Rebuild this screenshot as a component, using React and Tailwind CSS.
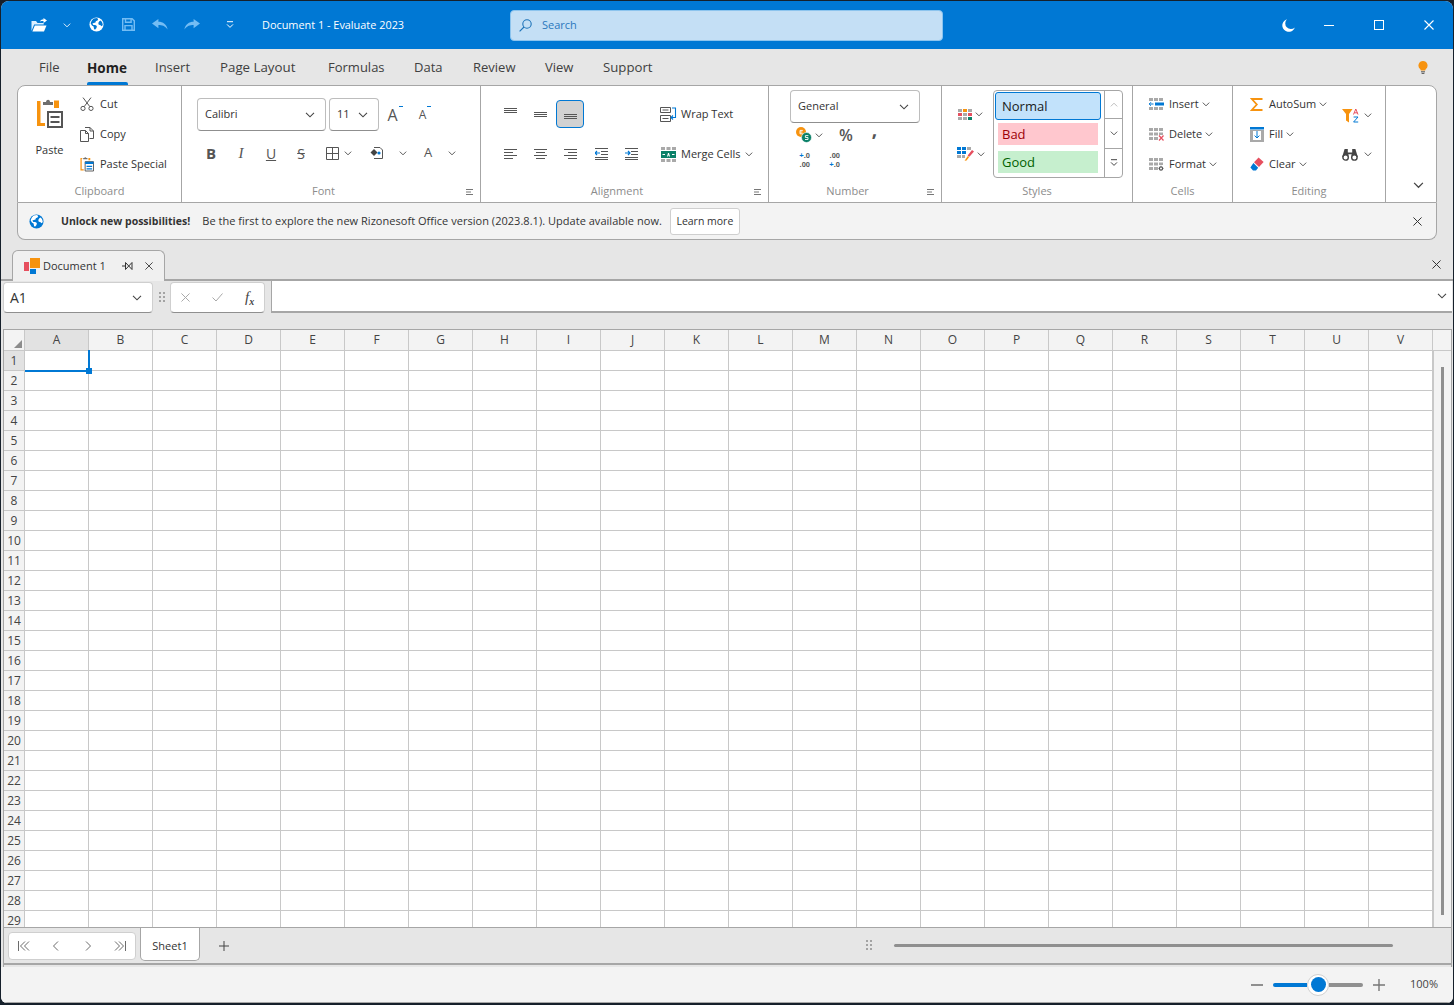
import React from "react";

const COLS = "ABCDEFGHIJKLMNOPQRSTUV".split("");
const ROWS = Array.from({ length: 29 }, (_, i) => i + 1);

// ---------- small drawings ----------
const Chevron = ({ w = 9, c = "#444", up = false }) => (
  <svg width={w} height={w * 0.6} viewBox="0 0 10 6" fill="none" stroke={c} strokeWidth="1.1" className="shrink-0">
    <path d={up ? "M1 5.5 5 1.5l4 4" : "M1 .8l4 4 4-4"} />
  </svg>
);

const X = ({ s = 10, c = "#333", sw = 1.1 }) => (
  <svg width={s} height={s} viewBox="0 0 10 10" stroke={c} strokeWidth={sw} className="shrink-0">
    <path d="M.5.5l9 9M9.5.5l-9 9" />
  </svg>
);

const Globe = ({ s = 16, bg = "#fff", fg = "#0078d4" }) => (
  <svg width={s} height={s} viewBox="0 0 16 16" className="shrink-0">
    <circle cx="8" cy="8" r="7.5" fill={bg} />
    <path fill={fg} d="M5 1.6 8.6 1l1.2 1.4-1 1.6-1.4.2-.5 1.6-1.8.6L3.6 7l1 1.4 2 .2 1.8 1-.4 2-1.6 1.9-1-.7-.5-2.6-1.8-1.2-1.4-2.4L3 3.6zM11 4.4l1.6-.6 1.6 2.2.5 2.4-1.2 1.4-1.6-1.3-1.5-.2-.5-1.9z" />
  </svg>
);

const TitleIcons = {
  Folder: () => (
    <svg width="16" height="14" viewBox="0 0 16 14" fill="#dcefff">
      <path d="M.5 3V13l2.6-6.6h9.6V5H6.5L5 3z" />
      <path d="M3.8 7.4h11.7L13 13.4H1.4z" fill="#fff" />
      <path d="M9 3.4c.6-1.4 2-2 3.5-1.8V0L16 2.6l-3.5 2.4V3c-1.4 0-2.6 0-3.5.4z" fill="#fff" />
    </svg>
  ),
  Save: () => (
    <svg width="13" height="13" viewBox="0 0 13 13" fill="none" stroke="#74bdf4" strokeWidth="1.4">
      <path d="M.7.7h9.4l2.2 2.2v9.4H.7z" />
      <path d="M3.5.7v3.6h5.6V.7M3 12.3V7.6h7v4.7" />
    </svg>
  ),
  Undo: ({ flip }) => (
    <svg width="16" height="11" viewBox="0 0 16 11" fill="#74bdf4" className={flip ? "-scale-x-100" : ""}>
      <path d="M6.4 0 0 4.6l6.4 4.6V6c3.6 0 6.6.8 9.2 4.4C14.6 5.4 11 2.8 6.4 2.8z" />
    </svg>
  ),
  Customize: () => (
    <svg width="8" height="8" viewBox="0 0 8 8" fill="none" stroke="#fff" strokeWidth="1">
      <path d="M1 .7h6M1 3.4l3 3 3-3" />
    </svg>
  ),
  Moon: () => (
    <svg width="13" height="13" viewBox="0 0 13 13" fill="#fff">
      <path d="M5 .3a6.4 6.4 0 1 0 7.8 8.2A5.6 5.6 0 0 1 5 .3z" />
    </svg>
  ),
};

const Paste = () => (
  <svg width="28" height="30" viewBox="0 0 28 30">
    <path fill="#f7930f" d="M1 2h3.5v22H9v3H1zM18 1.5h5V9h-5z" />
    <path fill="#6e6e6e" d="M7 3h3c.3-3 4-3 4 0h3v3H7z" />
    <path fill="#555" fillRule="evenodd" d="M11 12h16v17H11zm2 2v13h12V14z" />
    <path fill="#555" d="M14.5 17h9v2h-9zM14.5 22h9v2h-9z" />
  </svg>
);

const Scissors = () => (
  <svg width="14" height="14" viewBox="0 0 14 14" fill="none" stroke="#555" strokeWidth="1">
    <circle cx="3" cy="11.4" r="2.1" /><circle cx="11" cy="11.4" r="2.1" />
    <path d="M4.2 9.6 11 .6M9.8 9.6 3 .6" />
  </svg>
);

const Copy = () => (
  <svg width="14" height="15" viewBox="0 0 14 15" fill="none" stroke="#555" strokeWidth="1">
    <path d="M5 .5h5l3.5 3.5v7.5H9.5M10 .5v3.5h3.5" />
    <path d="M.5 3.5h5l3 3v8h-8zM5.5 3.5v3h3" fill="#fff" />
  </svg>
);

const PasteSpecial = () => (
  <svg width="15" height="16" viewBox="0 0 15 16">
    <path fill="#f7930f" d="M.5 1.5h2v1H1.8v11H4v1.400H.5zM9 1.500h2V4H9z" />
    <path fill="#6e6e6e" d="M3.4 1.6h1.2c.2-1.2 2-1.2 2.2 0H8V3H3.4z" />
    <path fill="#fff" stroke="#555" d="M5.5 5.5h9v10h-9z" />
    <path fill="#0078d4" d="M5.5 5.5h9V8h-9zM7 10h6v1.3H7zM7 12.5h6v1.3H7z" />
  </svg>
);

const Lines = ({ rows, c = "#555" }) => (
  // one svg for all the alignment glyphs, rows = [[x1,x2,y],...]
  <svg width="13" height="13" viewBox="0 0 13 13" stroke={c} strokeWidth="1" className="shrink-0">
    {rows.map((r, i) => <path key={i} d={`M${r[0]} ${r[2] + 0.5}H${r[1]}`} />)}
  </svg>
);

const Indent = ({ flip }) => (
  <svg width="13" height="12" viewBox="0 0 13 12" fill="none" className="shrink-0">
    <path stroke="#555" d="M0 .5h13M6 3.5h7M6 6.5h7M0 11.5h13M0 9.5h13" />
    <path stroke="#0078d4" strokeWidth="1.2" d={flip ? "M5 5H0M2 3 0 5l2 2" : "M0 5h5M3 3l2 2-2 2"} />
  </svg>
);

const WrapText = () => (
  <svg width="17" height="15" viewBox="0 0 17 15" fill="none">
    <path stroke="#555" d="M.5.5h10v5H.5zM.5 8.500h10v6H.5zM2.500 3h6M2.500 11.500h6" />
    <path stroke="#0078d4" strokeWidth="1.1" d="M12 1h3.500v9.500H11M13 8.500l-2 2 2 2" />
  </svg>
);

const MergeCells = () => (
  <svg width="15" height="15" viewBox="0 0 15 15">
    <path fill="#a9a9a9" d="M0 0h4v3H0zM5.500 0h4v3h-4zM11 0h4v3h-4zM0 12h4v3H0zM5.500 12h4v3h-4zM11 12h4v3h-4z" />
    <path fill="#0a8068" d="M0 4h15v7H0z" />
    <path fill="#fff" d="M1.500 7h2.500v1H1.500zM11 7h2.500v1H11zM6 9.500 7 6h1l1 3.500H8L7.500 8 7 9.500z" />
  </svg>
);

const Launcher = () => (
  <svg width="7" height="6" viewBox="0 0 7 6" stroke="#777" strokeWidth="1" className="shrink-0">
    <path d="M0 .5h7M0 3h5M0 5.500h7" />
  </svg>
);

const Currency = () => (
  <svg width="16" height="16" viewBox="0 0 16 16" className="shrink-0">
    <circle cx="5" cy="5" r="5" fill="#f7930f" />
    <circle cx="10.500" cy="10.500" r="5" fill="#0a8068" stroke="#fff" strokeWidth=".6" />
    <path d="M6.800 3.400H4v3.400h2.800M4 5h2.400" stroke="#fff" fill="none" strokeWidth=".9" />
    <path d="M12.400 8.600H9.400v1.900h2.600v2H9" stroke="#fff" fill="none" strokeWidth=".9" />
  </svg>
);

const StyleGrid = () => (
  <svg width="14" height="11" viewBox="0 0 14 11" className="shrink-0">
    <path fill="#a9a9a9" d="M0 0h4v3H0zM10 0h4v3h-4zM5 4h4v3H5zM0 8h4v3H0zM5 8h4v3H5z" />
    <path fill="#f7930f" d="M5 0h4v3H5z" />
    <path fill="#e64f5f" d="M0 4h4v3H0z" />
    <path fill="#e64f5f" d="M10 4h4v3h-4z" />
    <path fill="#0a8068" d="M10 8h4v3h-4z" />
  </svg>
);

const TableBrush = () => (
  <svg width="17" height="14" viewBox="0 0 17 14" className="shrink-0">
    <path fill="#0078d4" d="M0 0h4v3H0zM5 0h4v3H5zM0 4h4v3H0zM5 4h4v3H5z" />
    <path fill="#a9a9a9" d="M10 0h4v3h-4zM0 8h4v3H0zM5 8h3v3H5z" />
    <path fill="#e64f5f" d="M15 3l2 1.400-4.600 5.400-1.800-1.400z" />
    <path fill="#f7930f" d="M10.800 9l1.400 1.100L9.600 13.600 7.600 13.800z" />
  </svg>
);

const GrayCells = ({ children, w = 15, h = 13 }) => (
  <svg width={w} height={h} viewBox="0 0 15 13" className="shrink-0">
    <path fill="#a9a9a9" d="M0 0h4v3H0zM5 0h4v3H5zM10 0h4v3h-4zM0 4.500h4v3H0zM5 4.500h4v3H5zM10 4.500h4v3h-4zM0 9h4v3H0zM5 9h4v3H5zM10 9h4v3h-4z" />
    {children}
  </svg>
);

const InsertIcon = () => (
  <GrayCells>
    <path fill="#fff" d="M0 4h15v4H0z" />
    <path fill="#0078d4" d="M6 4.500h9v3H6z" />
    <path stroke="#0078d4" fill="none" d="M4.500 6H0M2 4.200 .2 6 2 7.800" />
  </GrayCells>
);
const DeleteIcon = () => (
  <GrayCells>
    <path fill="#fff" d="M9 7h6v6H9z" />
    <path stroke="#e64f5f" strokeWidth="1.2" d="M10 7.500l4.500 5M14.500 7.500l-4.500 5" />
  </GrayCells>
);
const FormatIcon = () => (
  <GrayCells>
    <path fill="#fff" d="M9 7h6v6H9z" />
    <circle cx="12" cy="10.400" r="1.600" fill="none" stroke="#555" strokeWidth="1.2" />
    <path stroke="#555" d="M12 7.800v.6M12 12.400v.6M9.600 10.400h.6M13.800 10.400h.6" />
  </GrayCells>
);

const Sigma = () => (
  <svg width="13" height="13" viewBox="0 0 13 13" fill="none" stroke="#f7930f" strokeWidth="1.8">
    <path d="M12.500 1H1.800l5 5.500-5 5.500h10.700" />
  </svg>
);
const Fill = () => (
  <svg width="14" height="15" viewBox="0 0 14 15">
    <path fill="#a9a9a9" d="M0 3h14v12H0z" />
    <path fill="#0078d4" d="M0 0h14v2.400H0z" />
    <path fill="#fff" d="M3 4h8v9H3z" />
    <path stroke="#0078d4" fill="none" d="M7 4v7M4.600 8.600 7 11l2.400-2.400" />
  </svg>
);
const Eraser = () => (
  <svg width="14" height="14" viewBox="0 0 14 14">
    <path fill="#e64f5f" d="M8.600.4 13.600 5 9 10 4 5.200z" />
    <path fill="#0078d4" d="M3.400 6 8.200 10.800 6 13.400H3L.4 10.600z" />
  </svg>
);
const SortFilter = () => (
  <svg width="18" height="15" viewBox="0 0 18 15">
    <path fill="#f7930f" d="M0 1h10.500L7 6v8.600L4 12.400V6z" />
    <path stroke="#e64f5f" fill="none" strokeWidth="1" d="M11.500 6.500l2.300-5.500 2.200 5.500M12.300 4.800h3" />
    <path stroke="#0078d4" fill="none" strokeWidth="1" d="M11.600 9h4.400l-4.400 5h4.600" />
  </svg>
);
const Binoculars = () => (
  <svg width="16" height="13" viewBox="0 0 16 13">
    <path fill="#444" d="M2.600 1h3.200v3.600h4.400V1h3.200l2.400 8H9.600V6.200H6.400V9H.2z" />
    <circle cx="3.600" cy="9.400" r="2.700" fill="#fff" stroke="#444" strokeWidth="1.4" />
    <circle cx="12.400" cy="9.400" r="2.700" fill="#fff" stroke="#444" strokeWidth="1.4" />
  </svg>
);
const Bulb = () => (
  <svg width="10" height="14" viewBox="0 0 10 14">
    <path fill="#f7930f" d="M5 0a4.600 4.600 0 0 1 2.800 8.200c-.4.4-.6.8-.6 1.300H2.800c0-.5-.2-.9-.6-1.300A4.600 4.600 0 0 1 5 0z" />
    <path stroke="#555" d="M3 10.800h4M3.600 12.400h2.800" />
  </svg>
);
const DocLogo = () => (
  <svg width="16" height="16" viewBox="0 0 16 16" className="shrink-0">
    <path fill="#e64f5f" d="M0 4h5v9H0z" />
    <path fill="#f7930f" d="M6 0h10v10H6z" />
    <path fill="#0078d4" d="M6 11h6v5H6z" />
  </svg>
);
const Pin = () => (
  <svg width="11" height="10" viewBox="0 0 11 10" fill="none" stroke="#333" strokeWidth="1">
    <path d="M0 5h3.500M3.500 1.500l6.500 7V1.500L3.500 8.500z" />
  </svg>
);
const Grip = () => (
  <svg width="6" height="10" viewBox="0 0 6 10" fill="#a3a3a3" className="shrink-0">
    <path d="M0 0h2v2H0zM4 0h2v2H4zM0 4h2v2H0zM4 4h2v2H4zM0 8h2v2H0zM4 8h2v2H4z" />
  </svg>
);
const NavGlyph = ({ d }) => (
  <svg width="12" height="10" viewBox="0 0 12 10" fill="none" stroke="#6b6b6b" strokeWidth="1" className="shrink-0">
    <path d={d} />
  </svg>
);
const Search = () => (
  <svg width="13" height="13" viewBox="0 0 13 13" fill="none" stroke="#1c72b8" strokeWidth="1.1" className="-scale-x-100">
    <circle cx="5" cy="5" r="4.200" /><path d="M8 8l4.400 4.400" />
  </svg>
);
// font grow / shrink: the A with its small blue tick
const FontSizeA = ({ cls }) => (
  <span className={`flex items-start text-[#555] ${cls}`}>
    <span>A</span>
    <span className="ml-[1px] mt-[1px] h-[1px] w-[4px] bg-[#0078d4]" />
  </span>
);

// ---------- ribbon parts ----------
const Group = ({ w, label, launcher, children }) => (
  <div className={`relative flex flex-col border-r border-[#a6a6a6] ${w}`}>
    <div className="h-[97px] shrink-0">{children}</div>
    <div className={`text-center text-[11px] leading-[15px] text-[#8c8c8c] ${launcher ? "pr-[15px]" : ""}`}>{label}</div>
    {launcher && <div className="absolute right-[7px] bottom-[7px] flex"><Launcher /></div>}
  </div>
);

const Small = ({ icon, label, chev, h = "h-[30px]", tw = "w-[14px]", gap = "gap-[6px]" }) => (
  <div className={`flex items-center ${h} ${gap} whitespace-nowrap`}>
    <span className={`flex justify-center ${tw}`}>{icon}</span>
    <span>{label}</span>
    {chev && <span className="-ml-[2px]"><Chevron w={8} /></span>}
  </div>
);

const Combo = ({ label, w }) => (
  <div className={`flex h-[33px] items-center justify-between rounded-[4px] border border-[#bdbdbd] border-b-[#8f8f8f] bg-white pl-[7px] pr-[10px] ${w}`}>
    <span>{label}</span>
    <Chevron w={10} />
  </div>
);

const Slot = ({ w = "w-[30px]", children }) => (
  <div className={`flex items-center justify-center ${w}`}>{children}</div>
);

const StyleChip = ({ label, cls }) => (
  <div className={`ml-[4px] mr-[6px] flex h-[22px] items-center pl-[4px] pt-[1px] text-[13px] ${cls}`}>{label}</div>
);

const Ribbon = () => (
  <div className="ml-[16px] w-[1420px] text-[11px] text-[#333]">
    <div className="flex h-[118px] rounded-t-[8px] border border-[#a6a6a6] bg-white">
      <Group w="w-[164px]" label="Clipboard">
        <div className="flex pt-[3px]">
          <div className="flex w-[62px] flex-col items-center pl-[1px] pt-[10px]">
            <Paste />
            <span className="mt-[14px] leading-[14px]">Paste</span>
          </div>
          <div className="flex flex-col">
            <Small icon={<Scissors />} label="Cut" />
            <Small icon={<Copy />} label="Copy" />
            <Small icon={<PasteSpecial />} label="Paste Special" />
          </div>
        </div>
      </Group>

      <Group w="w-[299px]" label="Font" launcher>
        <div className="pl-[15px] pt-[12px]">
          <div className="flex gap-[3px]">
            <Combo label="Calibri" w="w-[129px]" />
            <Combo label="11" w="w-[50px]" />
            <div className="-ml-[2px] flex items-center">
              <Slot><FontSizeA cls="text-[16px] leading-[20px]" /></Slot>
              <Slot><FontSizeA cls="text-[12px] leading-[20px]" /></Slot>
            </div>
          </div>
          <div className="-ml-[1px] mt-[10px] flex h-[24px] items-center text-[14px] text-[#555]">
            <Slot><span className="text-[15px] font-bold">B</span></Slot>
            <Slot><span className="font-['Liberation_Serif',serif] text-[15px] italic">I</span></Slot>
            <Slot><span className="underline">U</span></Slot>
            <Slot><span className="line-through">S</span></Slot>
            <div className="flex w-[54px] items-center gap-[5px] pl-[10px]">
              <svg width="13" height="13" viewBox="0 0 13 13" fill="none" stroke="#555" strokeWidth="1">
                <path d="M.5.5h12v12H.5zM6.500.5v12M.5 6.500h12" />
              </svg>
              <Chevron w={8} />
            </div>
            <div className="flex w-[52px] items-center gap-[16px]">
              <svg width="13" height="12" viewBox="0 0 13 12" fill="none">
                <path d="M4 .5h6l2.500 2.500v8.500H4" stroke="#555" />
                <path d="M4 2 .5 5.500 4 9l3.500-3.500z" fill="#444" />
                <circle cx="9" cy="6" r="1.600" fill="#0078d4" />
              </svg>
              <Chevron w={8} />
            </div>
            <div className="flex items-center gap-[16px] text-[13px] font-medium">
              <span className="ml-[2px]">A</span>
              <Chevron w={8} />
            </div>
          </div>
        </div>
      </Group>

      <Group w="w-[288px]" label="Alignment" launcher>
        <div className="flex pl-[14px] pt-[14px]">
          <div className="w-[165px]">
            <div className="flex h-[28px] items-center">
              <Slot><div className="-mt-[6px]"><Lines rows={[[0, 13, 3], [0, 13, 5], [0, 13, 7]]} /></div></Slot>
              <Slot><Lines rows={[[0, 13, 4], [0, 13, 6], [0, 13, 8]]} /></Slot>
              <div className="ml-[1px] flex h-[28px] w-[28px] items-center justify-center rounded-[4px] border border-[#0078d4] bg-[#d2d2d2] pt-[4px]">
                <Lines rows={[[0, 13, 4], [0, 13, 6], [0, 13, 8]]} />
              </div>
            </div>
            <div className="mt-[12px] flex h-[28px] items-center">
              <Slot><Lines rows={[[0, 13, 1], [0, 9, 4], [0, 13, 7], [0, 9, 10]]} /></Slot>
              <Slot><Lines rows={[[0, 13, 1], [2, 11, 4], [0, 13, 7], [2, 11, 10]]} /></Slot>
              <Slot><Lines rows={[[0, 13, 1], [4, 13, 4], [0, 13, 7], [4, 13, 10]]} /></Slot>
              <Slot w="w-[32px]"><Indent flip /></Slot>
              <Slot w="w-[28px]"><Indent /></Slot>
            </div>
          </div>
          <div>
            <div className="flex h-[28px] items-center gap-[4px]"><WrapText /><span>Wrap Text</span></div>
            <div className="mt-[12px] flex h-[28px] items-center gap-[5px]">
              <span className="pl-[1px]"><MergeCells /></span>
              <span>Merge Cells</span>
              <Chevron w={8} />
            </div>
          </div>
        </div>
      </Group>

      <Group w="w-[173px]" label="Number" launcher>
        <div className="pl-[21px] pt-[4px]">
          <Combo label="General" w="w-[130px]" />
          <div className="mt-[3px] flex h-[18px] items-center pl-[6px]">
            <Currency />
            <span className="ml-[3px]"><Chevron w={8} /></span>
            <span className="ml-[16px] text-[16px] font-semibold text-[#555]">%</span>
            <span className="-mt-[11px] ml-[19px] text-[19px] leading-[19px] font-bold text-[#555]">,</span>
          </div>
          <div className="mt-[8px] flex h-[18px] items-center gap-[15px] pl-[5px] font-['Liberation_Sans',sans-serif] text-[7.500px] leading-[8.700px] font-bold text-[#555]">
            <div className="w-[15px] text-right"><span className="text-[#0078d4]">+</span>.0<br />.00</div>
            <div className="w-[15px] text-right">.00<br /><span className="text-[#0078d4]">+</span>.0</div>
          </div>
        </div>
      </Group>

      <Group w="w-[191px]" label="Styles">
        <div className="flex pl-[16px] pt-[4px]">
          <div className="w-[35px] pt-[19px]">
            <div className="flex items-center gap-[3px]"><StyleGrid /><Chevron w={8} /></div>
            <div className="mt-[27px] -ml-[1px] flex items-center gap-[3px]"><TableBrush /><Chevron w={8} /></div>
          </div>
          <div className="flex h-[88px] w-[130px] rounded-[4px] border border-[#a6a6a6]">
            <div className="w-[110px] pt-[1px]">
              <div className="ml-[1px] mr-[3px] flex h-[28px] items-center rounded-[3px] border border-[#0078d4] bg-[#c2e2fb] pl-[6px] pt-[1px] text-[13px] text-[#1a1a1a]">Normal</div>
              <div className="mt-[3px]"><StyleChip label="Bad" cls="bg-[#ffc7ce] text-[#9c0006]" /></div>
              <div className="mt-[6px]"><StyleChip label="Good" cls="bg-[#c6efce] text-[#006100]" /></div>
            </div>
            <div className="flex flex-1 flex-col border-l border-[#a6a6a6]">
              <div className="flex h-[28px] items-center justify-center border-b border-[#a6a6a6]"><Chevron w={8} c="#b5b5b5" up /></div>
              <div className="flex h-[30px] items-center justify-center border-b border-[#a6a6a6]"><Chevron w={8} /></div>
              <div className="flex flex-1 items-center justify-center">
                <svg width="8" height="8" viewBox="0 0 8 8" fill="none" stroke="#444"><path d="M1 .7h6M1 3.400l3 3 3-3" /></svg>
              </div>
            </div>
          </div>
        </div>
      </Group>

      <Group w="w-[100px]" label="Cells">
        <div className="pl-[16px] pt-[3px]">
          <Small icon={<InsertIcon />} label="Insert" chev tw="w-[15px]" gap="gap-[5px]" />
          <Small icon={<DeleteIcon />} label="Delete" chev tw="w-[15px]" gap="gap-[5px]" />
          <Small icon={<FormatIcon />} label="Format" chev tw="w-[15px]" gap="gap-[5px]" />
        </div>
      </Group>

      <Group w="w-[153px]" label="Editing">
        <div className="flex pl-[16px] pt-[3px]">
          <div className="w-[93px]">
            <Small icon={<Sigma />} label="AutoSum" chev tw="w-[15px]" gap="gap-[5px]" />
            <Small icon={<Fill />} label="Fill" chev tw="w-[15px]" gap="gap-[5px]" />
            <Small icon={<Eraser />} label="Clear" chev tw="w-[15px]" gap="gap-[5px]" />
          </div>
          <div className="pt-[19px]">
            <div className="flex items-center gap-[4px]"><SortFilter /><Chevron w={8} /></div>
            <div className="mt-[25px] flex items-center gap-[6px]"><Binoculars /><Chevron w={8} /></div>
          </div>
        </div>
      </Group>

      <div className="flex flex-1 items-end justify-center pb-[13px] pl-[15px]"><Chevron w={11} /></div>
    </div>

    <div className="flex h-[37px] items-center rounded-b-[8px] border border-t-0 border-[#a6a6a6] bg-[#f3f3f3] pl-[11px] pr-[14px] pt-[1px]">
      <Globe s={15} bg="#0078d4" fg="#fff" />
      <span className="ml-[17px] text-[10.500px] font-bold">Unlock new possibilities!</span>
      <span className="ml-[12px] tracking-[0.03px]">Be the first to explore the new Rizonesoft Office version (2023.8.1). Update available now.</span>
      <div className="ml-[8px] flex h-[27px] w-[70px] items-center justify-center rounded-[3px] border border-[#cfcfcf] bg-white text-[10.500px]">Learn more</div>
      <div className="ml-auto flex"><X s={9} /></div>
    </div>
  </div>
);

// ---------- sheet ----------
const Sheet = () => (
  <div className="flex h-[598px] flex-col overflow-hidden border-t border-[#a6a6a6] bg-white text-[12px] text-[#444]">
    <div className="flex h-[21px] shrink-0 bg-[#f3f3f3]">
      <div className="relative w-[21px] border-r border-b border-[#c8c8c8]">
        <div className="absolute right-[2px] bottom-[2px] h-0 w-0 border-b-[8px] border-l-[8px] border-b-[#8c8c8c] border-l-transparent" />
      </div>
      {COLS.map((c) => (
        <div key={c} className={`flex w-[64px] items-center justify-center border-r border-b border-[#c8c8c8] ${c === "A" ? "bg-[#e2e2e2]" : ""}`}>{c}</div>
      ))}
      <div className="flex-1 border-b border-[#c8c8c8]" />
    </div>
    <div className="relative flex min-h-0 flex-1">
      <div className="min-w-0">
        {ROWS.map((r) => (
          <div key={r} className="flex h-[20px]">
            <div className={`flex w-[21px] items-center justify-center border-r border-b border-[#c8c8c8] ${r === 1 ? "bg-[#e2e2e2]" : "bg-[#f3f3f3]"}`}>{r}</div>
            {COLS.map((c) => (
              <div key={c} className="relative w-[64px] border-r border-b border-[#c8c8c8]">
                {r === 1 && c === "A" && (
                  <div className="absolute -top-[1px] -right-[2px] -bottom-[2px] left-0 z-10 border-r-2 border-b-2 border-[#0078d4]">
                    <div className="absolute -right-[4px] -bottom-[4px] h-[6px] w-[6px] bg-[#0078d4]" />
                  </div>
                )}
              </div>
            ))}
          </div>
        ))}
      </div>
      <div className="flex flex-1 justify-center border-l border-[#c8c8c8] bg-[#f3f3f3] pt-[16px] pb-[12px]">
        <div className="-ml-[1px] w-[3px] bg-[#8f8f8f]" />
      </div>
    </div>
  </div>
);

const App = () => (
  <div className="h-[1005px] w-[1454px] overflow-hidden bg-[#16202b] pt-[1px] pl-[1px] font-['Open_Sans',sans-serif]">
    <div className="flex h-[1002px] w-[1452px] flex-col overflow-hidden rounded-t-[8px] rounded-b-[6px] bg-[#e6e6e6]">
      {/* title bar */}
      <div className="flex h-[48px] shrink-0 items-center bg-[#0078d4] text-white">
        <div className="flex w-[509px] items-center pl-[30px]">
          <TitleIcons.Folder />
          <span className="ml-[16px]"><Chevron w={8} c="#fff" /></span>
          <span className="ml-[18px] flex"><Globe s={15} /></span>
          <span className="ml-[18px] flex"><TitleIcons.Save /></span>
          <span className="ml-[17px] flex"><TitleIcons.Undo /></span>
          <span className="ml-[16px] flex"><TitleIcons.Undo flip /></span>
          <span className="ml-[26px] flex"><TitleIcons.Customize /></span>
          <span className="ml-[28px] text-[10.900px] whitespace-nowrap">Document 1 - Evaluate 2023</span>
        </div>
        <div className="flex h-[31px] w-[433px] items-center gap-[10px] rounded-[4px] border border-[#8cc4ee] bg-[#c4dff5] pl-[8px] text-[11px] text-[#2b78bd]">
          <Search />
          <span>Search</span>
        </div>
        <div className="ml-auto flex items-center pr-[19px]">
          <TitleIcons.Moon />
          <div className="ml-[29px] h-[1px] w-[10px] bg-white" />
          <div className="ml-[40px] h-[10px] w-[10px] border border-white" />
          <div className="ml-[40px] flex"><X s={10} c="#fff" /></div>
        </div>
      </div>

      {/* menu tabs */}
      <div className="flex h-[36px] shrink-0 items-center pl-[38px] pt-[2px] text-[13px] text-[#404040] whitespace-nowrap">
        <span className="w-[48px]">File</span>
        <span className="relative flex h-full w-[68px] items-center text-[13.500px] font-bold text-[#1f1f1f]">
          Home
          <span className="absolute bottom-0 left-0 h-[3px] w-[41px] rounded-t-[2px] bg-[#0078d4]" />
        </span>
        <span className="w-[65px]">Insert</span>
        <span className="w-[108px] text-[13.300px]">Page Layout</span>
        <span className="w-[86px]">Formulas</span>
        <span className="w-[59px]">Data</span>
        <span className="w-[72px]">Review</span>
        <span className="w-[58px]">View</span>
        <span className="text-[13.200px]">Support</span>
        <span className="ml-auto mr-[25px] flex"><Bulb /></span>
      </div>

      <Ribbon />

      {/* document tab */}
      <div className="flex h-[41px] shrink-0 items-end border-b-2 border-[#a6a6a6] pl-[11px] pr-[12px]">
        <div className="-mb-[2px] flex h-[31px] w-[153px] items-center rounded-t-[6px] border border-b-0 border-[#a6a6a6] bg-[#f0f0f0] pl-[11px] pr-[11px] text-[11px] text-[#333]">
          <DocLogo />
          <span className="ml-[3px]">Document 1</span>
          <span className="ml-[16px] flex"><Pin /></span>
          <span className="ml-auto flex"><X s={8} /></span>
        </div>
        <div className="mb-[10px] ml-auto flex"><X s={9} /></div>
      </div>

      {/* formula bar */}
      <div className="flex h-[32px] shrink-0 items-start pl-[2px] pr-[1px]">
        <div className="mt-[1px] flex h-[31px] w-[150px] items-center justify-between rounded-[4px] border border-[#cfcfcf] border-b-[#8f8f8f] bg-white pl-[6px] pr-[10px] text-[14px] text-[#333]">
          A1 <Chevron w={10} />
        </div>
        <div className="flex h-[32px] w-[17px] items-center justify-center"><Grip /></div>
        <div className="mt-[1px] flex h-[31px] w-[95px] items-center rounded-[4px] border border-[#cfcfcf] border-b-[#8f8f8f] bg-white">
          <span className="flex w-[29px] justify-center"><X s={9} c="#a8a8a8" /></span>
          <span className="flex w-[34px] justify-center">
            <svg width="11" height="9" viewBox="0 0 11 9" fill="none" stroke="#a8a8a8"><path d="M.5 4.500 4 8l6.500-7.500" /></svg>
          </span>
          <span className="ml-[11px] font-['Liberation_Serif',serif] text-[15px] leading-[15px] text-[#444] italic">f<sub className="text-[10px] font-bold">x</sub></span>
        </div>
        <div className="ml-[6px] flex h-[32px] flex-1 items-center justify-end border-b-2 border-l border-[#a6a6a6] bg-white pr-[5px]">
          <Chevron w={10} />
        </div>
      </div>

      {/* sheet */}
      <div className="ml-[2px] mr-[1px] mt-[16px] flex min-h-0 flex-1 flex-col border-x border-[#a6a6a6]">
        <Sheet />
        <div className="flex h-[38px] shrink-0 border-t border-b-2 border-[#a6a6a6] pl-[4px] text-[11px] text-[#333]">
          <div className="mt-[4px] flex h-[28px] w-[128px] items-center justify-between rounded-[4px] border border-[#cfcfcf] bg-white px-[9px]">
            <NavGlyph d="M.5 0v10M7 .5 2.500 5 7 9.500M11 .5 6.500 5l4.500 4.500" />
            <NavGlyph d="M8 .5 3.500 5 8 9.500" />
            <NavGlyph d="M4 .5 8.500 5 4 9.500" />
            <NavGlyph d="M11.500 0v10M5 .5 9.500 5 5 9.500M1 .5 5.500 5 1 9.500" />
          </div>
          <div className="ml-[4px] flex h-[33px] w-[60px] items-center justify-center rounded-b-[5px] border border-t-0 border-[#a6a6a6] bg-white pt-[5px]">Sheet1</div>
          <div className="ml-[19px] flex h-[35px] items-center">
            <svg width="10" height="10" viewBox="0 0 10 10" stroke="#444"><path d="M5 0v10M0 5h10" /></svg>
          </div>
          <div className="ml-[637px] flex h-[34px] items-center"><Grip /></div>
          <div className="ml-[22px] mt-[16px] h-[3px] w-[499px] rounded-full bg-[#8f8f8f]" />
        </div>
      </div>

      {/* status bar */}
      <div className="flex h-[36px] shrink-0 items-center justify-end border-b border-[#a6a6a6] bg-[#f3f3f3] pr-[15px] text-[11px] text-[#444]">
        <div className="h-[2px] w-[12px] bg-[#8f8f8f]" />
        <div className="ml-[10px] flex h-[22px] w-[90px] items-center">
          <div className="h-[4px] w-[34px] rounded-l-full bg-[#0078d4]" />
          <div className="flex h-[22px] w-[22px] shrink-0 items-center justify-center rounded-full border border-[#cfcfcf] bg-white">
            <div className="h-[15px] w-[15px] rounded-full bg-[#0078d4]" />
          </div>
          <div className="h-[4px] flex-1 rounded-r-full bg-[#8f8f8f]" />
        </div>
        <svg className="ml-[10px]" width="12" height="12" viewBox="0 0 12 12" stroke="#777" strokeWidth="1.4"><path d="M6 0v12M0 6h12" /></svg>
        <span className="ml-[25px]">100%</span>
      </div>
    </div>
  </div>
);

export default App;
